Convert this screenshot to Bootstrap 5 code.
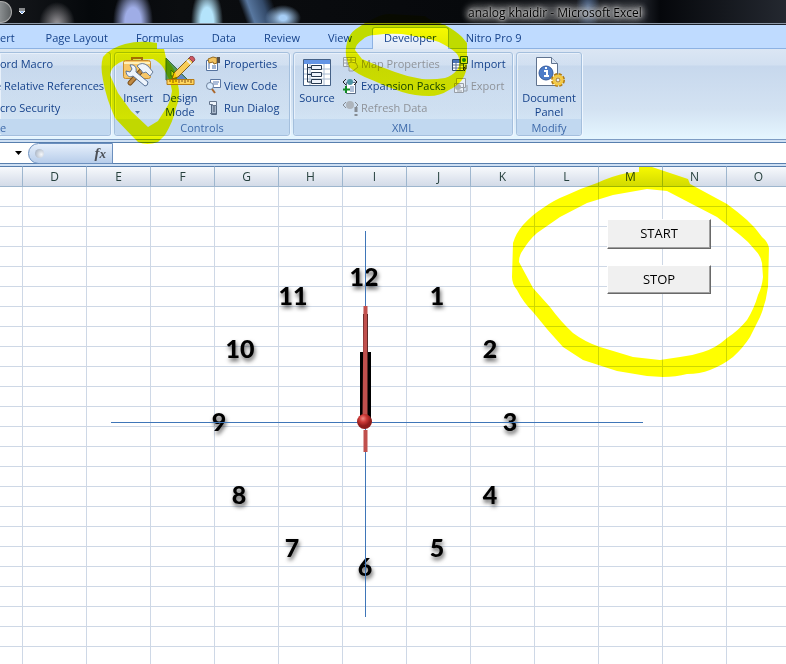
<!DOCTYPE html>
<html lang="en">
<head>
<meta charset="utf-8">
<meta name="viewport" content="width=device-width, initial-scale=1">
<title>analog khaidir - Microsoft Excel</title>
<link href="https://cdn.jsdelivr.net/npm/bootstrap@5.3.0/dist/css/bootstrap.min.css" rel="stylesheet">
<style>
body{font-family:"Open Sans","Noto Sans",sans-serif;font-size:11px;line-height:14px;color:#15428b;background:#fff}
button{font:inherit;color:inherit;background:none;border:0;padding:0}
.titlebar{height:25px;border-bottom:1px solid #1a2029;box-shadow:inset 0 -1px #8b97a6;
 background:radial-gradient(ellipse 20px 36px at 133px 22px,#9fade6 40%,transparent),
 radial-gradient(ellipse 16px 36px at 207px 22px,#b4e4fb 40%,transparent),
 radial-gradient(ellipse 18px 13px at 283px 18px,#a6cdf5 20%,transparent),
 radial-gradient(ellipse 18px 22px at 57px 24px,#8d8b8f 10%,transparent),
 radial-gradient(ellipse 12px 26px at 588px 8px,#4a6286 5%,transparent),
 linear-gradient(70deg,transparent 232px,#58779f 240px,#344b6b 254px,transparent 264px),
 linear-gradient(90deg,#16181c,#05080b 90px,#0b0d10 180px,#07090c 60%,#1b1e24 82%,#05070b 84%,#242830 100%)}
.orb{width:12px;height:22px;border-radius:0 11px 11px 0;border:1px solid #aaa;border-left:0;background:linear-gradient(90deg,#8a8e90,#5d6163)}
.wintitle{color:#000;font-size:12px;border-radius:9px;background:#ffffff38;box-shadow:0 0 6px 3px #ffffff38;line-height:12px;text-shadow:0 0 2px #ccc,0 0 4px #ccc,0 0 6px #bbb,0 0 8px #aaa;margin:2px 0 0 433px}
.tabstrip{height:24px;background:#bfdbff;border-bottom:1px solid #8db2e3}
.tabstrip button{padding:2px 14px 0}
.tabstrip .current{background:linear-gradient(#f6faff,#e1eaf6);border:1px solid #8db2e3;border-bottom:0;border-radius:3px 3px 0 0;padding:0 11px 1px;margin:2px 3px 0 6px;height:22px}
.tabstrip .first{padding:2px 17px 0 0}
.ribbon{height:90px;padding:3px 0 2px;gap:3px;background:linear-gradient(#dbe6f4,#d2e0f1 16px,#c7d8ed 17px,#d3e2f2 60px,#e5f6ff)}
.panel{border:1px solid #a4bfdd;border-radius:3px;box-shadow:inset 1px 1px #e8f0fa,1px 1px #eef6ff;background:linear-gradient(#dde8f500,#c3d8ee66);height:84px}
.panel footer{background:#c1d8f0;color:#3e6aaa;height:16px;text-align:center;border-radius:0 0 3px 3px;line-height:17px}
.panel-code{border-left:0;border-radius:0 3px 3px 0;width:111px}
.panel-controls{width:176px}
.panel-xml{width:220px}
.panel-modify{width:66px}
.cut{margin-left:-5px}
.cmds{padding-left:2px}
.big{width:42px;text-align:center;line-height:14px;padding-top:3px;flex:none}
.big>svg:first-child{display:block;margin:0 auto 3px}
.small-cmds button{display:flex;height:22px;align-items:center;gap:3px;white-space:nowrap}
.small-cmds.wide{margin-left:6px}
.small-cmds svg,.big svg{flex:none}
.small-cmds button:disabled{color:#8f9399}
.small-cmds button:disabled svg{filter:grayscale(1);opacity:.6}
.formula{height:27px;padding:2px 0 4px;background:#cfe0f3;border-top:1px solid #7d9cc4}
.formula>div{border-top:1px solid #587fae;border-bottom:1px solid #587fae;background:#fff;height:22px;padding-left:15px}
.fxbar{width:85px;border:1px solid #6b8fbe;border-radius:11px 0 0 11px;margin-left:6px;background:linear-gradient(#e6effb,#b7cdea);font:italic bold 15px/19px "Liberation Serif",serif;color:#4b4f56;padding:0 6px}
.knob{width:9px;height:9px;border-radius:50%;background:radial-gradient(circle at 70% 60%,#f5f7fa,#98a6b9)}
.sheet{min-height:0}
.grid{table-layout:fixed;width:791px;border-collapse:separate;border-spacing:0}
.grid .rowhead{width:23px}
.grid th,.grid td{padding:0;height:20px;border-right:1px solid #ced8e6;border-bottom:1px solid #ced8e6}
.grid th{height:21px;font:12px/19px "Open Sans",sans-serif;color:#27413e;text-align:center;border-color:#9eb6ce;border-top:1px solid #587fae;background:linear-gradient(#f7f9fc,#d3dbe8)}
.clock text{font:900 25px Lato,sans-serif;text-anchor:middle;filter:drop-shadow(1px 3px 2px #000a)}
.ctl{position:absolute;left:607px;width:104px;height:30px;background:#f0f0f0;color:#000;font-size:13px;line-height:24px;padding-bottom:2px;border:1px solid;border-color:#fff #696969 #696969 #fff;box-shadow:inset -1px -1px #a0a0a0}
.start{top:53px}.stop{top:99px;height:29px}
.marker{mix-blend-mode:multiply;pointer-events:none}
</style>
<script src="https://cdn.jsdelivr.net/npm/bootstrap@5.3.0/dist/js/bootstrap.bundle.min.js"></script>
</head>
<body class="vh-100 d-flex flex-column overflow-hidden position-relative">
<header class="titlebar d-flex align-items-center flex-shrink-0">
 <div class="orb"></div>
 <svg class="ms-1 me-2" width="11" height="8" viewBox="0 0 11 8"><path d="M3 1h6M3 3h6L6 6z" stroke="#fff" fill="#6d9ce0"/></svg>
 <span class="wintitle text-nowrap">analog khaidir - Microsoft Excel</span>
</header>
<nav class="tabstrip d-flex flex-shrink-0 text-nowrap" aria-label="Ribbon tabs">
 <button class="first">ert</button><button>Page Layout</button><button>Formulas</button><button>Data</button><button>Review</button><button>View</button><button class="current">Developer</button><button>Nitro Pro 9</button>
</nav>
<main class="ribbon d-flex flex-shrink-0">
 <section class="panel panel-code d-flex flex-column">
  <div class="small-cmds flex-grow-1"><button>ord Macro</button><button class="cut">e Relative References</button><button>cro Security</button></div>
  <footer class="text-start">e</footer>
 </section>
 <section class="panel panel-controls d-flex flex-column">
  <div class="cmds d-flex flex-grow-1">
   <button class="big align-self-start"><svg width="32" height="32" viewBox="0 0 32 32"><path d="M10 5V2h10v3" fill="none" stroke="#a36e20" stroke-width="2"/><rect x="1.500" y="4.500" width="27" height="18" rx="2" fill="#f8c768" stroke="#c78b2d"/><path d="M2 7h26" stroke="#fff0bc" stroke-width="2"/><path d="M19 15L8 27" stroke="#7b501c" stroke-width="5" stroke-linecap="round"/><path d="M19 15L8 27" stroke="#c18a41" stroke-width="3" stroke-linecap="round"/><path d="M15 10q5-5 11 0l5 6-3 4-4-4-3 1-2-3z" fill="#edf3fa" stroke="#6b7e99"/><path d="M8 9l2 4-2 3-4-1c0 5 4 7 7 5l12 10q3 0 3-4L14 16c1-5-2-8-6-7z" fill="#edf4fc" stroke="#587296"/></svg>Insert<br><svg width="6" height="4"><path d="M0 0h5L2.500 3z" fill="#5579a8"/></svg></button>
   <button class="big align-self-start"><svg width="32" height="32" viewBox="0 0 32 32"><path d="M2 2v22h22zM7 14v6h6z" fill="#559750" fill-rule="evenodd" stroke="#376e48"/><path d="M15 16l7 7h-9z" fill="#6286c4"/><path d="M3 23.500h27v5H3z" fill="#ffd55e" stroke="#b77b14"/><path d="M6 24v2M9 24v3M12 24v2M15 24v3M18 24v2M21 24v3M24 24v2M27 24v3" stroke="#865310"/><path d="M8 23l2-6L25 2l4 4-15 15z" fill="#f9cd57" stroke="#82601e"/><path d="M25 2l4 4 2-2q-1-4-4-4z" fill="#cf5762" stroke="#8f4852"/><path d="M23 4l4 4" stroke="#eee" stroke-width="2"/></svg>Design<br>Mode</button>
   <div class="small-cmds ms-1">
    <button><svg width="16" height="16" viewBox="0 0 16 16"><path d="M1.500 4.500h11v10h-11z" fill="#fff" stroke="#54729e"/><path d="M3 8h2M3 10h2M3 12h2M7 10h4M7 12h4" stroke="#4068a5"/><path d="M3 3l5-2 4 1v5l-3 1-1-2-4 1z" fill="#f3c35f" stroke="#946b22"/><path d="M12 1h3v6h-3z" fill="#55504c"/></svg>Properties</button>
    <button><svg width="16" height="16" viewBox="0 0 16 16"><path d="M5.500 1.500h10v8h-10z" fill="#fff" stroke="#5a76a2"/><path d="M8 4h6M8 6h5" stroke="#587ab3"/><circle cx="5" cy="8" r="3.500" fill="#d8ebff" stroke="#70839d"/><path d="M7 11l3 4" stroke="#aa672d" stroke-width="2"/></svg>View Code</button>
    <button><svg width="16" height="16" viewBox="0 0 16 16"><path d="M6.500 3.500h5v11h-5z" fill="#a9b9cc" stroke="#53667f"/><path d="M4.500 1.500h7v4h-4v-1h-3zM5 13.500h6" fill="#eef4fa" stroke="#64758c"/><path d="M8 7h2M8 9h2M8 11h2" stroke="#44556c"/></svg>Run Dialog</button>
   </div>
  </div>
  <footer>Controls</footer>
 </section>
 <section class="panel panel-xml d-flex flex-column">
  <div class="cmds d-flex flex-grow-1">
   <button class="big align-self-start me-1"><svg width="32" height="32" viewBox="0 0 32 32"><path d="M2.500 3.500h27v26h-27z" fill="#fff" stroke="#456187"/><path d="M3 4h26v4H3z" fill="#6394e5"/><path d="M3 13h26M3 18h26M3 23h26M9 8v21M23 8v21" stroke="#a8bad1"/><path d="M6.500 8v18h4M6 11.500h4M6 18.500h4" fill="none" stroke="#26384f"/><path d="M10.500 9.500h10v4h-10zM10.500 16.500h10v4h-10zM10.500 23.500h10v4h-10z" fill="#eef3fb" stroke="#26384f"/></svg>Source</button>
   <div class="small-cmds">
    <button disabled><svg width="16" height="16" viewBox="0 0 16 16"><path d="M1.500 1.500h12v9h-12zM2 4h11M2 7h11M5 2v8M9 2v8" fill="#fff" stroke="#687381"/><path d="M5 8l4-2 5 1 2 4-5 4H7V9z" fill="#ddd" stroke="#777"/></svg>Map Properties</button>
    <button><svg width="16" height="16" viewBox="0 0 16 16"><path d="M4.500 4.500h9v11h-9z" fill="#fff" stroke="#596b83"/><path d="M8 9h4M8 11h4M8 13h4" stroke="#6583b3"/><path d="M4 1L1 4l3 3M12 1l3 3-3 3" fill="none" stroke="#222"/><circle cx="8" cy="4" r="3" fill="#4e93a3"/><path d="M4 8v7M1 11.500h7" stroke="#118b25" stroke-width="2"/></svg>Expansion Packs</button>
    <button disabled><svg width="16" height="16" viewBox="0 0 16 16"><path d="M4 2L1 5l3 3M13 2l3 3-3 3" fill="none" stroke="#555"/><circle cx="8" cy="5" r="4" fill="#999"/><path d="M14 7v5M14 14v2" stroke="#555" stroke-width="3"/></svg>Refresh Data</button>
   </div>
   <div class="small-cmds wide">
    <button><svg width="16" height="16" viewBox="0 0 16 16"><path d="M.5 3.500h11v11H.5z" fill="#fff" stroke="#344e73"/><path d="M1 4h10v3H1z" fill="#4875bd"/><path d="M1 9h10M1 12h10M4 5v9M8 5v9" stroke="#5b7394"/><path d="M8.500.5h7v7h-7z" fill="#dce9ae" stroke="#335626"/><circle cx="12" cy="4" r="2" fill="#14841a"/><path d="M14 9v4h-3M13 11l-2 2 2 2" fill="none" stroke="#222"/></svg>Import</button>
    <button disabled><svg width="16" height="16" viewBox="0 0 16 16"><path d="M4.500.5h9v9h-9zM2.500 5.500h9v9h-9z" fill="#fff" stroke="#777"/><circle cx="6" cy="9" r="3" fill="#999"/><path d="M5 13h5M15 7v6h-3" stroke="#777" fill="none"/></svg>Export</button>
   </div>
  </div>
  <footer>XML</footer>
 </section>
 <section class="panel panel-modify d-flex flex-column">
  <button class="big w-100 flex-grow-1 d-flex flex-column"><svg width="32" height="32" viewBox="0 0 32 32"><path d="M3.500 1.500h15l6 6v22h-21z" fill="#fff" stroke="#60738f"/><path d="M18.500 1.500v6h6" fill="#dae5f4" stroke="#60738f"/><circle cx="13" cy="17" r="7" fill="#4d7cc8" stroke="#355c9d"/><path d="M11 15h3v5m-3 0h5M12 12h2" stroke="#fff" stroke-width="2" fill="none"/><circle cx="25" cy="24" r="5.500" fill="none" stroke="#b27b12" stroke-width="3" stroke-dasharray="3 1.300"/><circle cx="25" cy="24" r="4" fill="#e8eff9" stroke="#f4ca45" stroke-width="3"/><circle cx="25" cy="24" r="2" fill="#e8eff9" stroke="#a87614"/></svg><span class="w-100">Document<br>Panel</span></button>
  <footer>Modify</footer>
 </section>
</main>
<div class="formula flex-shrink-0"><div class="d-flex align-items-center">
 <svg width="7" height="4"><path d="M0 0h7L3.500 4z"/></svg>
 <div class="fxbar d-flex align-items-center justify-content-between"><span class="knob"></span><span>f<small>x</small></span></div>
</div></div>
<div class="sheet flex-grow-1 position-relative overflow-hidden">
 <table class="grid" aria-label="Worksheet"><colgroup><col class="rowhead"></colgroup>
 <thead><tr><th></th><th>D</th><th>E</th><th>F</th><th>G</th><th>H</th><th>I</th><th>J</th><th>K</th><th>L</th><th>M</th><th>N</th><th>O</th></tr></thead><tbody id="cells"></tbody></table>
 <svg class="clock position-absolute top-0 start-0" width="786" height="498" viewBox="0 166 786 498" role="img" aria-label="Analog clock">
  <defs><radialGradient id="ball" cx=".4" cy=".3"><stop offset="0" stop-color="#f08a84"/><stop offset=".5" stop-color="#cc3835"/><stop offset="1" stop-color="#8f1c1b"/></radialGradient></defs>
  <g><text x="364" y="286">12</text><text x="437" y="305">1</text><text x="490" y="358">2</text><text x="510" y="431">3</text><text x="490" y="504">4</text><text x="437" y="557">5</text><text x="365" y="576">6</text><text x="292" y="557">7</text><text x="239" y="504">8</text><text x="219" y="431">9</text><text x="240" y="358">10</text><text x="293" y="305">11</text></g>
  <path d="M111 422.500h532M365.500 231v386" stroke="#3f76b8"/>
  <path d="M360 352h11v66h-11zM363 314h5v40h-5z"/>
  <path d="M363.500 306h4v113h-5zM363.500 430h4v22h-4z" fill="#c0504d"/>
  <circle cx="364.500" cy="421.500" r="7.500" fill="url(#ball)"/>
 </svg>
 <button class="ctl start">START</button><button class="ctl stop">STOP</button>
</div>
<svg class="marker position-absolute top-0 start-0" width="786" height="664" viewBox="0 0 786 664" fill="#ff0" fill-rule="evenodd" aria-hidden="true">
 <path d="M157 43Q140 40 125 44 110 48 103 57 100 66 103 80 106 98 115 118 128 132 138 142 147 146 158 142L165 135Q173 122 176 108 181 96 178 85 177 75 173 68L166 58 164 49 157 49zM110 75Q111 68 116 65 122 60 130 60L153 59Q160 62 164 69L170 81 172 91Q171 99 168 105L158 121 148 127 131 111 118 93z"/>
 <path d="M346 56Q345 45 349 37 352 31 359 27 367 21 375 18 382 14 389 14L425 16 429 19 445 25Q456 31 462 37L467 43V63Q467 72 462 80 456 87 449 90 440 96 429 96 415 96 402 92 387 87 372 80 358 75 349 67zM355 50Q356 44 362 40 367 35 375 35 388 33 402 34 423 37 439 42 449 47 455 52 459 55 459 60 460 66 457 70 452 76 445 78 433 80 422 79 408 77 395 72 378 66 362 59z"/>
 <path d="M639 167L652 167 670 173 688 179 690 184 727 204Q738 212 747 220 755 227 762 237 768 242 769 248L768 287Q766 303 760 317L750 337Q743 348 733 357 723 365 710 370 700 374 687 374 676 377 663 377L647 376 617 371 583 360 563 347Q548 331 533 312 523 302 517 290 512 284 512 277L513 243Q516 233 523 225 532 215 543 208 554 200 567 195 582 188 597 183 612 176 627 173L639 172zM519 262Q519 255 523 250 529 240 537 233L560 217 587 203 613 195 647 189 667 191 690 203 717 217 740 235Q749 242 755 250 761 256 762 263L763 277Q762 287 758 295 754 309 747 320 738 331 727 338 716 348 703 352 691 356 680 357L660 360 633 357 600 347Q585 342 573 333 561 322 550 307L533 288z"/>
</svg>
<script>
document.getElementById('cells').innerHTML = ('<tr>' + '<td></td>'.repeat(13) + '</tr>').repeat(25);
</script>
</body>
</html>
